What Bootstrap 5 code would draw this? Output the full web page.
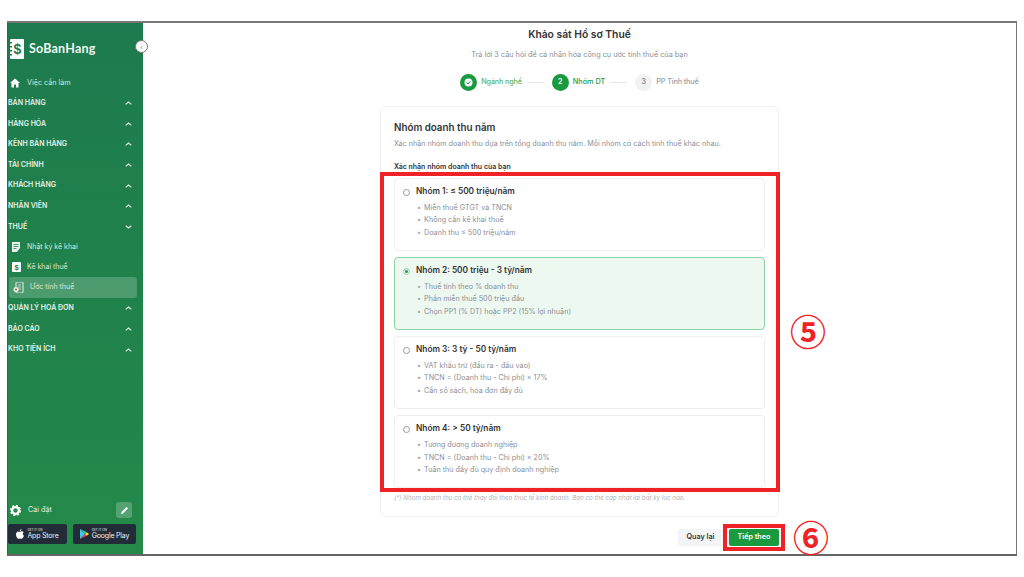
<!DOCTYPE html>
<html lang="vi"><head><meta charset="utf-8">
<link href="https://cdn.jsdelivr.net/npm/bootstrap@5.3.0/dist/css/bootstrap.min.css" rel="stylesheet">
<style>
html,body{height:577px;overflow:hidden;background:#fff}
body{font-family:Inter,"Noto Sans",sans-serif;color:#333}
.frame{margin:21px 7px 0 7px;height:535px;border-top:2px solid #777;border-bottom:2px solid #666;border-right:1px solid #777}
.side{width:136px;background:linear-gradient(#1d7a4e,#248a49);color:#fff;position:relative;flex:none;border-left:1px solid #555}
.collapse-dot{position:absolute;right:-5px;top:17px;width:13px;height:13px;border-radius:50%;background:#fff;border:1px solid #777;font-size:6px;line-height:11px;text-align:center;color:#666}
.logo-row{height:24px;margin-top:14px;padding-left:1px;gap:5px}
.logo-name{font-family:Lato,sans-serif;font-weight:700;font-size:12.5px;letter-spacing:.2px;color:#eef7f1}
.todo{height:20px;margin-top:12px;padding-left:2px;gap:7px;font-size:7.2px;color:#d5e8dc}
.sec{height:20.6px;font-size:7px;font-weight:600;color:#e4f1e9;padding-right:11px}
.sub{height:20px;font-size:7px;color:#d5e8dc;padding-left:4px;gap:6px}
.sub-on{height:21px;background:rgba(255,255,255,.2);border-radius:3px;margin-right:6px;margin-left:1px;padding-left:4px}
.foot{margin-top:auto;padding-bottom:10px}
.set-row{padding:0 11px 0 2px;height:18px;font-size:7.2px;color:#e0efe6;gap:7px;margin-bottom:5px}
.pen{width:16px;height:16px;background:rgba(255,255,255,.22);border-radius:3px}
.stores{gap:6px;padding-right:6px}
.store{height:20px;background:#222b38;border-radius:2px;gap:3px;color:#eee;letter-spacing:-.2px}
.store-a{width:59px}
.store-g{width:63px}
.store-t{font-size:7px;line-height:7px}
.store-s{font-size:3px;line-height:3px;letter-spacing:0}
.ttl{font-size:10.3px;font-weight:600;margin-top:4px;line-height:14px;color:#333}
.subttl{font-size:7.3px;color:#8b8f96;margin-top:9px;line-height:9px}
.steps{margin-top:14px;height:18px;font-size:7.3px;font-weight:500}
.step-c{width:17px;height:17px;border-radius:50%;font-size:7px;font-weight:600}
.step-on{background:#1a9a3e;color:#fff}
.step-off{background:#f1f2f4;color:#888}
.step-l{width:17px;height:1px;background:#e5e7eb;margin:0 8px 0 5px}
.lbl-done{color:#5eb672;margin-left:4px;letter-spacing:-.2px}
.lbl-on{color:#1f9a4a;margin-left:4px}
.lbl-off{color:#9aa0a6;margin-left:4px;letter-spacing:-.15px}
.panel{width:399px;height:411px;margin-top:15px;border:1px solid #f0f0f2;border-radius:6px;padding:15px 13px 0;position:relative}
.ph{font-size:9.8px;font-weight:600;line-height:12px;color:#333}
.pd{font-size:7.2px;color:#8b8f96;margin-top:5px;line-height:9px}
.pq{font-size:7px;font-weight:600;margin-top:14px;line-height:9px;color:#333}
.opts{margin-top:7px}
.opt{height:73px;border:1px solid #eceef0;border-radius:4px;padding:6px 8px;margin-bottom:6.1px;background:#fff}
.opt-on{background:#edf8f1;border-color:#8fd3a5}
.rad{width:7px;height:7px;border-radius:50%;border:1px solid #9a9a9a;flex:none;margin-top:4px;margin-right:6px;background:#fff}
.rad-on{border-color:#bfe3cb;background:#1a9a3e;box-shadow:inset 0 0 0 1px #fff}
.ot{font-size:8.3px;font-weight:600;line-height:13px;color:#333}
.ol{list-style:none;margin:4px 0 0;padding:0;font-size:7.2px;color:#8b8f96;line-height:12.3px}
.ol li::before{content:"•";margin:0 3px 0 1px;color:#aaa}
.note{font-size:6.2px;font-style:italic;color:#b0b3b8;line-height:8px;margin-top:3px}
.redbox{position:absolute;border:4px solid #ee2227;pointer-events:none}
.red5{left:-1px;top:65px;width:400px;height:320px}
.red6{left:-6px;right:-6px;top:-5px;bottom:-5px}
.acts{margin-top:10px;height:20px;width:399px;gap:6px}
.bk{height:17px;width:45px;background:#f3f4f6;border-radius:2px;font-size:7.2px;font-weight:600;color:#333}
.nx{height:17px;width:50px;background:#1a9a3e;border-radius:2px;font-size:7.2px;font-weight:600;color:#fff;position:relative}
.circ{font-family:"Noto Sans CJK SC",sans-serif;color:#ee2227;font-size:36px;line-height:36px;position:absolute;font-weight:700}
.c5{left:647px;top:289px}
.c6{left:650px;top:495px}
</style></head><body>
<div class="frame d-flex">
<aside class="side d-flex flex-column">
<span class="collapse-dot">‹</span>
<div class="logo-row d-flex align-items-center">
<svg width="15" height="20" viewBox="0 0 15 20"><rect x="1" y="0" width="14" height="20" rx="1" fill="#fff"/><g fill="#1d7a4e"><rect x="0" y="3" width="3" height="1.5"/><rect x="0" y="7" width="3" height="1.5"/><rect x="0" y="11" width="3" height="1.5"/><rect x="0" y="15" width="3" height="1.5"/></g><text x="8.500" y="15" text-anchor="middle" font-size="14" font-weight="700" font-family="Liberation Sans" fill="#1d7a4e">$</text></svg>
<span class="logo-name">SoBanHang</span></div>
<div class="todo d-flex align-items-center"><svg width="10" height="10" viewBox="0 0 10 10"><path d="M5 .5 0 5h1.500v4.500h2.500V6.500h2v3h2.500V5H10z" fill="#fff"/></svg>Việc cần làm</div>
<div class="sec d-flex align-items-center justify-content-between"><span>BÁN HÀNG</span><svg width="7" height="4" viewBox="0 0 7 4"><path d="M.7 3.300 3.500 1l2.800 2.300" fill="none" stroke="#e4f1e9" stroke-width="1.100"/></svg></div>
<div class="sec d-flex align-items-center justify-content-between"><span>HÀNG HÓA</span><svg width="7" height="4" viewBox="0 0 7 4"><path d="M.7 3.300 3.500 1l2.800 2.300" fill="none" stroke="#e4f1e9" stroke-width="1.100"/></svg></div>
<div class="sec d-flex align-items-center justify-content-between"><span>KÊNH BÁN HÀNG</span><svg width="7" height="4" viewBox="0 0 7 4"><path d="M.7 3.300 3.500 1l2.800 2.300" fill="none" stroke="#e4f1e9" stroke-width="1.100"/></svg></div>
<div class="sec d-flex align-items-center justify-content-between"><span>TÀI CHÍNH</span><svg width="7" height="4" viewBox="0 0 7 4"><path d="M.7 3.300 3.500 1l2.800 2.300" fill="none" stroke="#e4f1e9" stroke-width="1.100"/></svg></div>
<div class="sec d-flex align-items-center justify-content-between"><span>KHÁCH HÀNG</span><svg width="7" height="4" viewBox="0 0 7 4"><path d="M.7 3.300 3.500 1l2.800 2.300" fill="none" stroke="#e4f1e9" stroke-width="1.100"/></svg></div>
<div class="sec d-flex align-items-center justify-content-between"><span>NHÂN VIÊN</span><svg width="7" height="4" viewBox="0 0 7 4"><path d="M.7 3.300 3.500 1l2.800 2.300" fill="none" stroke="#e4f1e9" stroke-width="1.100"/></svg></div>
<div class="sec d-flex align-items-center justify-content-between"><span>THUẾ</span><svg width="7" height="4" viewBox="0 0 7 4"><path d="M.7.700 3.500 3l2.800-2.300" fill="none" stroke="#e4f1e9" stroke-width="1.100"/></svg></div>
<div class="sub d-flex align-items-center"><svg width="9" height="10" viewBox="0 0 9 10"><path d="M0 0h8v6L5 10H0z" fill="#e8f3ec"/><path d="M1.500 2.500h5M1.500 4.500h5M1.500 6.500h3" stroke="#1f8049" stroke-width=".8"/></svg>Nhật ký kê khai</div>
<div class="sub d-flex align-items-center"><svg width="9" height="10" viewBox="0 0 9 10"><rect width="9" height="10" rx="1" fill="#fff"/><text x="4.500" y="8" text-anchor="middle" font-size="7.500" font-weight="700" font-family="Liberation Sans" fill="#1f8049">$</text></svg>Kê khai thuế</div>
<div class="sub sub-on d-flex align-items-center"><svg width="11" height="11" viewBox="0 0 11 11"><rect x="3" y="0" width="7" height="11" rx="1" fill="none" stroke="#e8f3ec"/><path d="M5 3h3M5 5h3M5 7h3" stroke="#e8f3ec" stroke-width=".7"/><circle cx="3" cy="7.500" r="2.500" fill="#e8f3ec"/><circle cx="3" cy="7.500" r="1" fill="#c0553f"/></svg>Ước tính thuế</div>
<div class="sec d-flex align-items-center justify-content-between"><span>QUẢN LÝ HOÁ ĐƠN</span><svg width="7" height="4" viewBox="0 0 7 4"><path d="M.7 3.300 3.500 1l2.800 2.300" fill="none" stroke="#e4f1e9" stroke-width="1.100"/></svg></div>
<div class="sec d-flex align-items-center justify-content-between"><span>BÁO CÁO</span><svg width="7" height="4" viewBox="0 0 7 4"><path d="M.7 3.300 3.500 1l2.800 2.300" fill="none" stroke="#e4f1e9" stroke-width="1.100"/></svg></div>
<div class="sec d-flex align-items-center justify-content-between"><span>KHO TIỆN ÍCH</span><svg width="7" height="4" viewBox="0 0 7 4"><path d="M.7 3.300 3.500 1l2.800 2.300" fill="none" stroke="#e4f1e9" stroke-width="1.100"/></svg></div>
<div class="foot">
<div class="set-row d-flex align-items-center"><svg width="11" height="11" viewBox="0 0 11 11"><circle cx="5.500" cy="5.500" r="3.400" fill="none" stroke="#fff" stroke-width="2.400"/><circle cx="5.500" cy="5.500" r="5" fill="none" stroke="#fff" stroke-width="1.300" stroke-dasharray="2 1.900"/></svg><span>Cài đặt</span><span class="pen d-flex align-items-center justify-content-center ms-auto"><svg width="9" height="9" viewBox="0 0 9 9"><path d="M1 8l.5-2L6.500 1 8 2.500 3 7.500z" fill="#fff"/></svg></span></div>
<div class="stores d-flex">
<div class="store store-a d-flex align-items-center justify-content-center"><svg width="8" height="10" viewBox="0 0 8 10"><path d="M5.500 0C5.500 1.300 4.500 2.200 3.800 2.100 3.800 1 4.700 .2 5.500 0zM4 2.700c.6 0 1.100-.4 1.900-.4.700 0 1.400.4 1.800 1-1.400.9-1.200 2.900.3 3.500C7.500 8 6.600 9.800 5.600 9.800 4.900 9.800 4.700 9.400 4 9.400s-1 .4-1.600.4C1.400 9.800 0 7.500 0 5.500 0 3.600 1.200 2.400 2.300 2.400c.7 0 1.300.3 1.700.3z" fill="#fff"/></svg><div><div class="store-s">GET IT ON</div><div class="store-t">App Store</div></div></div>
<div class="store store-g d-flex align-items-center justify-content-center"><svg width="9" height="10" viewBox="0 0 9 10"><path d="M0 0v10l5-5z" fill="#3ec6f0"/><path d="M0 0l5 5 1.800-1.800z" fill="#3fce7c"/><path d="M0 10l5-5 1.800 1.800z" fill="#ee4545"/><path d="M6.800 3.200 5 5l1.800 1.800L9 5z" fill="#ffcf30"/></svg><div><div class="store-s">GET IT ON</div><div class="store-t">Google Play</div></div></div>
</div></div>
</aside>
<main class="flex-grow-1 d-flex flex-column align-items-center position-relative">
<div class="ttl">Khảo sát Hồ sơ Thuế</div>
<div class="subttl">Trả lời 3 câu hỏi để cá nhân hóa công cụ ước tính thuế của bạn</div>
<div class="steps d-flex align-items-center">
<span class="step-c step-on d-flex align-items-center justify-content-center"><svg width="9" height="9" viewBox="0 0 9 9"><circle cx="4.500" cy="4.500" r="4" fill="#fff"/><path d="M2.600 4.600 4 6l2.400-2.700" fill="none" stroke="#1a9a3e"/></svg></span><span class="lbl-done">Ngành nghề</span><span class="step-l"></span>
<span class="step-c step-on d-flex align-items-center justify-content-center">2</span><span class="lbl-on">Nhóm DT</span><span class="step-l"></span>
<span class="step-c step-off d-flex align-items-center justify-content-center">3</span><span class="lbl-off">PP Tính thuế</span>
</div>
<section class="panel">
<div class="ph">Nhóm doanh thu năm</div>
<div class="pd">Xác nhận nhóm doanh thu dựa trên tổng doanh thu năm. Mỗi nhóm có cách tính thuế khác nhau.</div>
<div class="pq">Xác nhận nhóm doanh thu của bạn</div>
<div class="opts">
<div class="opt d-flex"><span class="rad"></span><div><div class="ot">Nhóm 1: ≤ 500 triệu/năm</div><ul class="ol"><li>Miễn thuế GTGT và TNCN</li><li>Không cần kê khai thuế</li><li>Doanh thu ≤ 500 triệu/năm</li></ul></div></div>
<div class="opt opt-on d-flex"><span class="rad rad-on"></span><div><div class="ot">Nhóm 2: 500 triệu - 3 tỷ/năm</div><ul class="ol"><li>Thuế tính theo % doanh thu</li><li>Phần miễn thuế 500 triệu đầu</li><li>Chọn PP1 (% DT) hoặc PP2 (15% lợi nhuận)</li></ul></div></div>
<div class="opt d-flex"><span class="rad"></span><div><div class="ot">Nhóm 3: 3 tỷ - 50 tỷ/năm</div><ul class="ol"><li>VAT khấu trừ (đầu ra - đầu vào)</li><li>TNCN = (Doanh thu - Chi phí) × 17%</li><li>Cần sổ sách, hóa đơn đầy đủ</li></ul></div></div>
<div class="opt d-flex"><span class="rad"></span><div><div class="ot">Nhóm 4: &gt; 50 tỷ/năm</div><ul class="ol"><li>Tương đương doanh nghiệp</li><li>TNCN = (Doanh thu - Chi phí) × 20%</li><li>Tuân thủ đầy đủ quy định doanh nghiệp</li></ul></div></div>
</div>
<div class="note">(*) Nhóm doanh thu có thể thay đổi theo thực tế kinh doanh. Bạn có thể cập nhật lại bất kỳ lúc nào.</div>
<div class="redbox red5"></div>
</section>
<div class="acts d-flex justify-content-end align-items-center"><span class="bk d-flex align-items-center justify-content-center">Quay lại</span><span class="nx d-flex align-items-center justify-content-center">Tiếp theo<span class="redbox red6"></span></span></div>
<span class="circ c5">⑤</span>
<span class="circ c6">⑥</span>
</main>
</div>
<script src="https://cdn.jsdelivr.net/npm/bootstrap@5.3.0/dist/js/bootstrap.bundle.min.js"></script>
</body></html>
